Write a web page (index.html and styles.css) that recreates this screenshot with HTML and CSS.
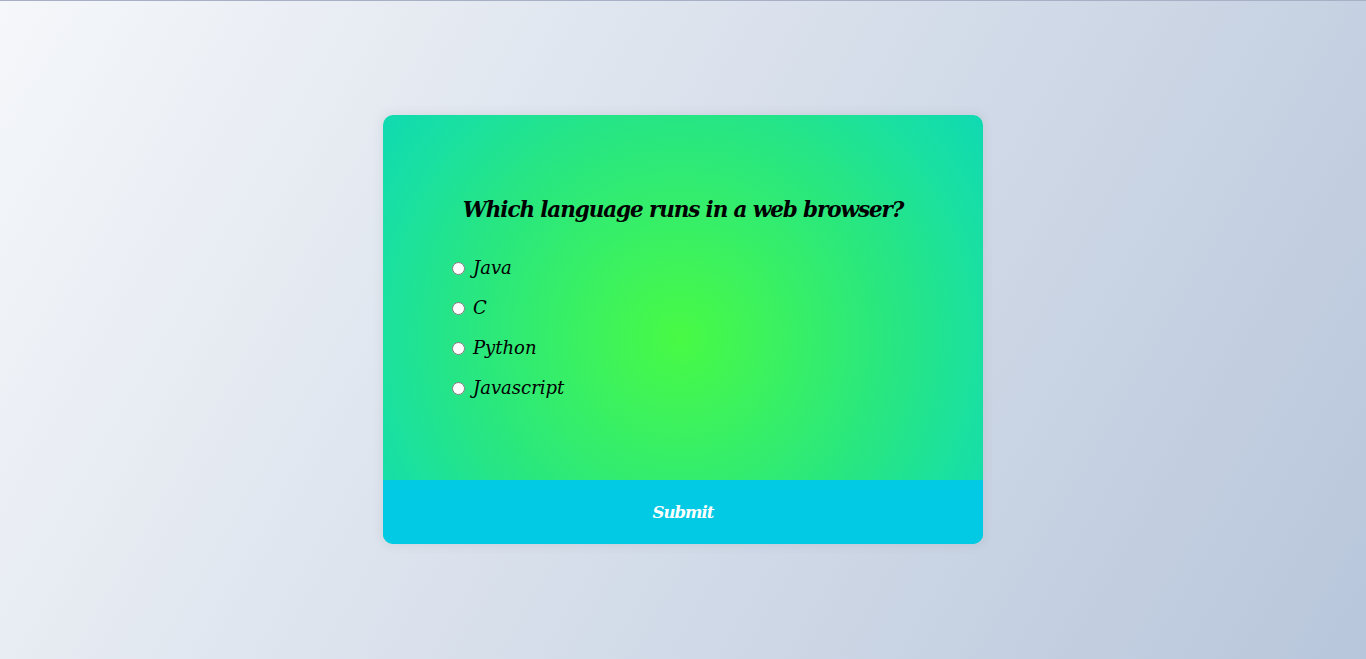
FILE: index.html
```html
<!DOCTYPE html>
<html lang="en">
<head>
<meta charset="UTF-8">
<title>Quiz</title>
<link rel="stylesheet" href="styles.css">
</head>
<body>
<div class="quiz-container">
  <div class="quiz-header">
    <h2 class="question">Which language runs in a web browser?</h2>
    <ul class="answers">
      <li><input type="radio" name="answer" id="a"><label for="a">Java</label></li>
      <li><input type="radio" name="answer" id="b"><label for="b">C</label></li>
      <li><input type="radio" name="answer" id="c"><label for="c">Python</label></li>
      <li><input type="radio" name="answer" id="d"><label for="d">Javascript</label></li>
    </ul>
  </div>
  <button class="submit">Submit</button>
</div>
</body>
</html>
```
FILE: styles.css
```css
* { box-sizing: border-box; }
html, body { height: 100%; }
body {
  margin: 0;
  background:
    linear-gradient(#a7b0c4, #a7b0c4) top left / 100% 1px no-repeat,
    linear-gradient(120deg, #f5f7fa 0%, #b8c6db 100%);
  font-family: "DejaVu Serif", "Liberation Serif", serif;
  display: flex;
  align-items: center;
  justify-content: center;
  overflow: hidden;
}
.quiz-container {
  width: 600px;
  border-radius: 10px;
  overflow: hidden;
  background: radial-gradient(circle at 49.5% 52%, #48fa44 0%, #3ef35a 20%, #26e585 60%, #1ae1a0 80%, #0fd9b3 100%);
  box-shadow: 0 0 10px 2px rgba(100, 100, 100, 0.1);
}
.quiz-header { padding: 64px; }
.question {
  margin: 0;
  padding: 16px 0;
  text-align: center;
  font-size: 21.5px;
  line-height: 29px;
  font-style: italic;
  font-weight: bold;
  white-space: nowrap;
  letter-spacing: -1.1px;
  color: #000;
}
.answers { list-style: none; margin: 0; padding: 0; }
.answers li {
  font-size: 18px;
  line-height: 24px;
  margin: 16px 0;
  font-style: italic;
  display: flex;
  align-items: center;
}
.answers input {
  margin: 0 8px 0 5px;
  width: 13px;
  height: 13px;
}
.answers label { cursor: pointer; }
.submit {
  display: block;
  width: 100%;
  height: 64px;
  border: none;
  background: #03cae4;
  color: #fff;
  font-family: inherit;
  font-size: 16.5px;
  font-style: italic;
  font-weight: bold;
  letter-spacing: -1px;
  cursor: pointer;
}
```
